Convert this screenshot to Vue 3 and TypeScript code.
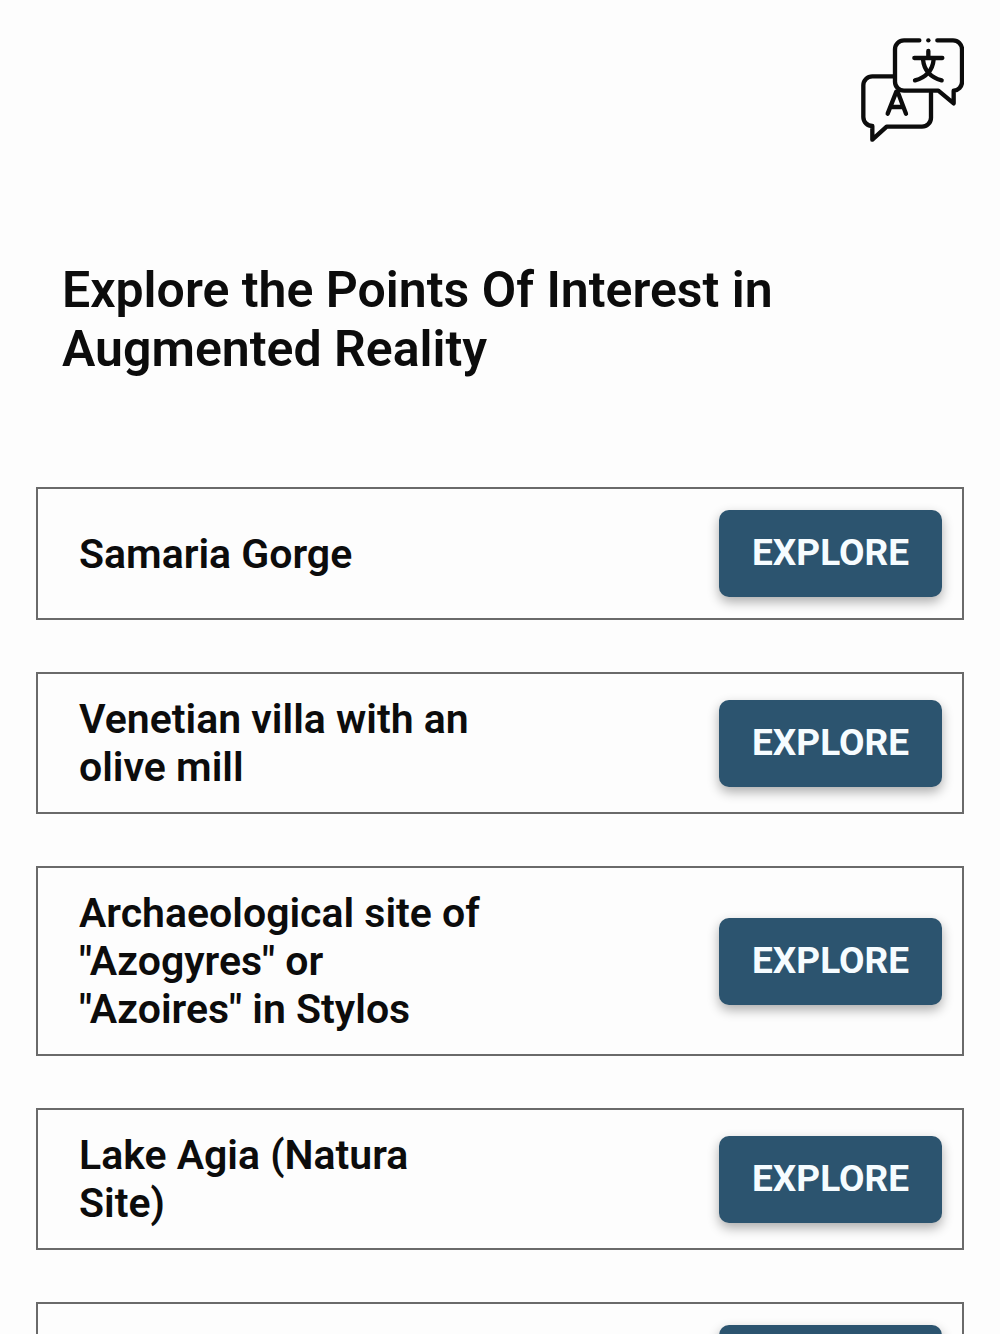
<script setup lang="ts">
interface PointOfInterest {
  id: number
  name: string
}

const points: PointOfInterest[] = [
  { id: 1, name: 'Samaria Gorge' },
  { id: 2, name: 'Venetian villa with an olive mill' },
  { id: 3, name: 'Archaeological site of "Azogyres" or "Azoires" in Stylos' },
  { id: 4, name: 'Lake Agia (Natura Site)' },
  { id: 5, name: '' },
]
</script>

<template>
  <main class="page">
    <header class="top">
      <button class="language" type="button" aria-label="Change language">
        <svg viewBox="24 33 318 318" aria-hidden="true">
          <path d="M208 46H162a27 27 0 0 0-27 27v97a27 27 0 0 0 27 27h103l46 38v-38a26 26 0 0 0 25-26V73a27 27 0 0 0-27-27h-47" />
          <path d="M235 46h.1" />
          <path d="M129 154H67a27 27 0 0 0-27 27v95a27 27 0 0 0 27 27v41l43-39h106a27 27 0 0 0 27-27v-74" />
          <path d="M113 266l26-66h4l25 66M122 246h38" />
          <path d="M235 78v21M193 99h84M219 103c3 32 23 54 56 63M251 103c-3 32-23 54-56 63" />
        </svg>
      </button>
    </header>
    <h1 class="title">Explore the Points Of Interest in Augmented Reality</h1>
    <ul class="list">
      <li v-for="point in points" :key="point.id" class="card">
        <h2 class="name">{{ point.name }}</h2>
        <button class="explore" type="button">EXPLORE</button>
      </li>
    </ul>
  </main>
</template>

<style>
body {
  margin: 0;
  background: #fdfdfd;
}
</style>

<style scoped>
.page {
  box-sizing: border-box;
  height: 100vh;
  overflow-y: auto;
  scrollbar-width: none;
  padding: 36px;
  background: #fdfdfd;
  color: #0c0c0c;
  font-family: Roboto, "Liberation Sans", sans-serif;
}

.top {
  display: flex;
  justify-content: flex-end;
}

.language {
  width: 106px;
  height: 106px;
  padding: 0;
  border: 0;
  background: none;
  color: #0c0c0c;
  cursor: pointer;
}

.language svg {
  display: block;
  width: 100%;
  height: 100%;
  fill: none;
  stroke: currentColor;
  stroke-width: 13;
  stroke-linecap: round;
  stroke-linejoin: round;
}

.title {
  margin: 119px 26px 108px;
  font-size: 50px;
  line-height: 59px;
  font-weight: 600;
}

.list {
  display: flex;
  flex-direction: column;
  gap: 52px;
  margin: 0;
  padding: 0;
  list-style: none;
}

.card {
  display: flex;
  align-items: center;
  justify-content: space-between;
  padding: 21px 20px 21px 41px;
  border: 2px solid #6a6a6a;
}

.name {
  flex: 0 0 48%;
  margin: 0;
  font-size: 41px;
  line-height: 48px;
  font-weight: 600;
}

.explore {
  width: 223px;
  height: 87px;
  padding: 0 0 2px;
  border: 0;
  border-radius: 10px;
  background: #2c546f;
  box-shadow: 0 5px 12px rgba(0, 0, 0, 0.32);
  color: #f6fcff;
  font-family: inherit;
  font-size: 37px;
  font-weight: 700;
  cursor: pointer;
}
</style>
